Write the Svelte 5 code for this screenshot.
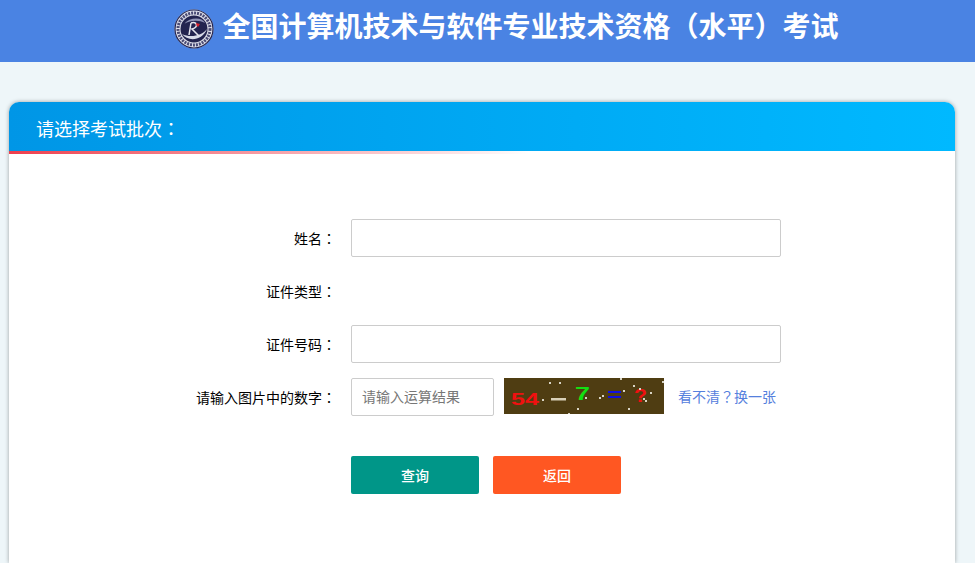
<script>
	const fields = [
		{ label: '姓名', type: 'text' },
		{ label: '证件类型', type: 'none' },
		{ label: '证件号码', type: 'text' }
	];

	const dots = [
		[45, 4], [55, 4], [116, 0], [129, 7], [135, 10], [158, 3], [119, 12], [146, 14], [38, 21],
		[81, 19], [95, 19], [98, 17], [141, 22], [139, 20], [73, 30], [64, 35], [124, 30]
	];
</script>

<header class="top">
	<svg class="logo" viewBox="0 0 40 40" width="40" height="40" aria-hidden="true">
		<circle cx="20" cy="20" r="19.5" fill="#dfe0ea" />
		<circle cx="20" cy="20" r="19" fill="none" stroke="#23244f" stroke-width="1.2" />
		<circle cx="20" cy="20" r="16" fill="none" stroke="#4a4b75" stroke-width="3" stroke-dasharray="2 1" />
		<circle cx="20" cy="20" r="13.5" fill="#23244f" />
		<path d="M8 25 C14 33 28 32 33 20 C28 27 16 29 8 25Z" fill="#d8dbe8" />
		<path d="M10 15 C16 8 28 8 31 14 C25 11 17 11 10 15Z" fill="#8f93b5" />
		<path d="M17 14 L15 26 M17 14 C23 12 25 18 18 20 L25 27" fill="none" stroke="#e4e5ee" stroke-width="1.5" />
		<path d="M22 14 L26 15 L24 18 L22.5 16.5Z" fill="#d8232f" />
	</svg>
	<h1>全国计算机技术与软件专业技术资格<span class="punct">（</span>水平<span class="punct">）</span>考试</h1>
</header>

<main class="card">
	<div class="card-head">
		<h2>请选择考试批次<span class="punct">：</span></h2>
	</div>
	<form class="form" onsubmit={(e) => e.preventDefault()}>
		{#each fields as field}
			<div class="row">
				<label>{field.label}<span class="punct">：</span></label>
				{#if field.type === 'text'}
					<input class="input" type="text" />
				{/if}
			</div>
		{/each}

		<div class="row">
			<label>请输入图片中的数字<span class="punct">：</span></label>
			<input class="input short" type="text" placeholder="请输入运算结果" />
			<svg class="captcha" viewBox="0 0 160 36" width="160" height="36" aria-label="54 - 7 = ?">
				<rect width="160" height="36" fill="#4f3d12" />
				<text x="7" y="27" textLength="28" lengthAdjust="spacingAndGlyphs" class="cap" fill="#f01010" font-size="17">54</text>
				<rect x="47" y="20" width="15" height="2.5" fill="#d8d0b8" />
				<text x="71" y="22" class="cap" fill="#12e012" font-size="18" textLength="15" lengthAdjust="spacingAndGlyphs">7</text>
				<rect x="104" y="13" width="13" height="2" fill="#1010e0" />
				<rect x="104" y="18" width="13" height="2" fill="#1010e0" />
				<text x="130" y="24" class="cap" fill="#f01010" font-size="18" textLength="13" lengthAdjust="spacingAndGlyphs">?</text>
				{#each dots as [x, y]}
					<rect {x} {y} width="2" height="2" fill="#d8d4c4" />
				{/each}
			</svg>
			<a class="refresh" href="#top">看不清<span class="punct">？</span>换一张</a>
		</div>

		<div class="actions">
			<button class="btn query" type="submit">查询</button>
			<button class="btn back" type="button">返回</button>
		</div>
	</form>
</main>

<style>
	:global(body) {
		margin: 0;
		background: #eef6f9;
		font-family: "Liberation Sans", "Noto Sans CJK SC", sans-serif;
		overflow: hidden;
	}

	.top {
		display: flex;
		height: 62px;
		align-items: flex-start;
		justify-content: center;
		padding: 9px 0 0 38px;
		background: #4a83e3;
		box-sizing: border-box;
		gap: 8px;
	}

	.logo {
		flex: 0 0 auto;
	}

	h1 {
		margin: 0;
		color: #ffffff;
		font-size: 28px;
		font-weight: 700;
		line-height: 38px;
		white-space: nowrap;
	}

	.punct {
		font-family: "Liberation Sans", "Noto Sans CJK TC", sans-serif;
	}

	.card {
		width: 946px;
		height: 461px;
		margin: 40px 0 0 9px;
		border-radius: 10px 10px 0 0;
		background: #ffffff;
		box-shadow: 0 0 4px rgba(0, 0, 0, 0.35);
		overflow: hidden;
	}

	.card-head {
		position: relative;
		height: 49px;
		background: linear-gradient(90deg, #0096e6, #00b9ff);
	}

	.card-head::after {
		content: '';
		position: absolute;
		left: 0;
		right: 0;
		top: 49px;
		height: 3px;
		background: linear-gradient(90deg, #ee3f4d, rgba(238, 63, 77, 0) 55%);
	}

	h2 {
		margin: 0;
		padding-left: 27px;
		color: #ffffff;
		font-size: 18px;
		font-weight: 400;
		line-height: 56px;
	}

	.form {
		padding: 68px 0 0;
	}

	.row {
		display: flex;
		height: 38px;
		margin-bottom: 15px;
		align-items: center;
	}

	label {
		width: 327px;
		padding-right: 15px;
		color: #000000;
		font-size: 14px;
		text-align: right;
	}

	.input {
		width: 430px;
		height: 38px;
		padding: 0 10px;
		border: 1px solid #cccccc;
		border-radius: 2px;
		background: #ffffff;
		box-sizing: border-box;
		font-family: inherit;
		font-size: 14px;
	}

	.input.short {
		width: 143px;
	}

	.input::placeholder {
		color: #777777;
	}

	.captcha {
		display: block;
		align-self: flex-start;
		margin-left: 10px;
		flex: 0 0 auto;
	}

	.cap {
		font-family: "Liberation Sans", sans-serif;
		font-weight: 700;
	}

	.refresh {
		margin: -2px 0 0 14px;
		color: #5580dd;
		font-size: 14px;
		text-decoration: none;
		white-space: nowrap;
	}

	.actions {
		display: flex;
		gap: 14px;
		margin-top: 40px;
		padding-left: 342px;
	}

	.btn {
		width: 128px;
		height: 38px;
		border: 0;
		border-radius: 2px;
		color: #ffffff;
		font-family: inherit;
		font-size: 14px;
		font-weight: 500;
	}

	.query {
		background: #009688;
	}

	.back {
		background: #ff5722;
	}
</style>
